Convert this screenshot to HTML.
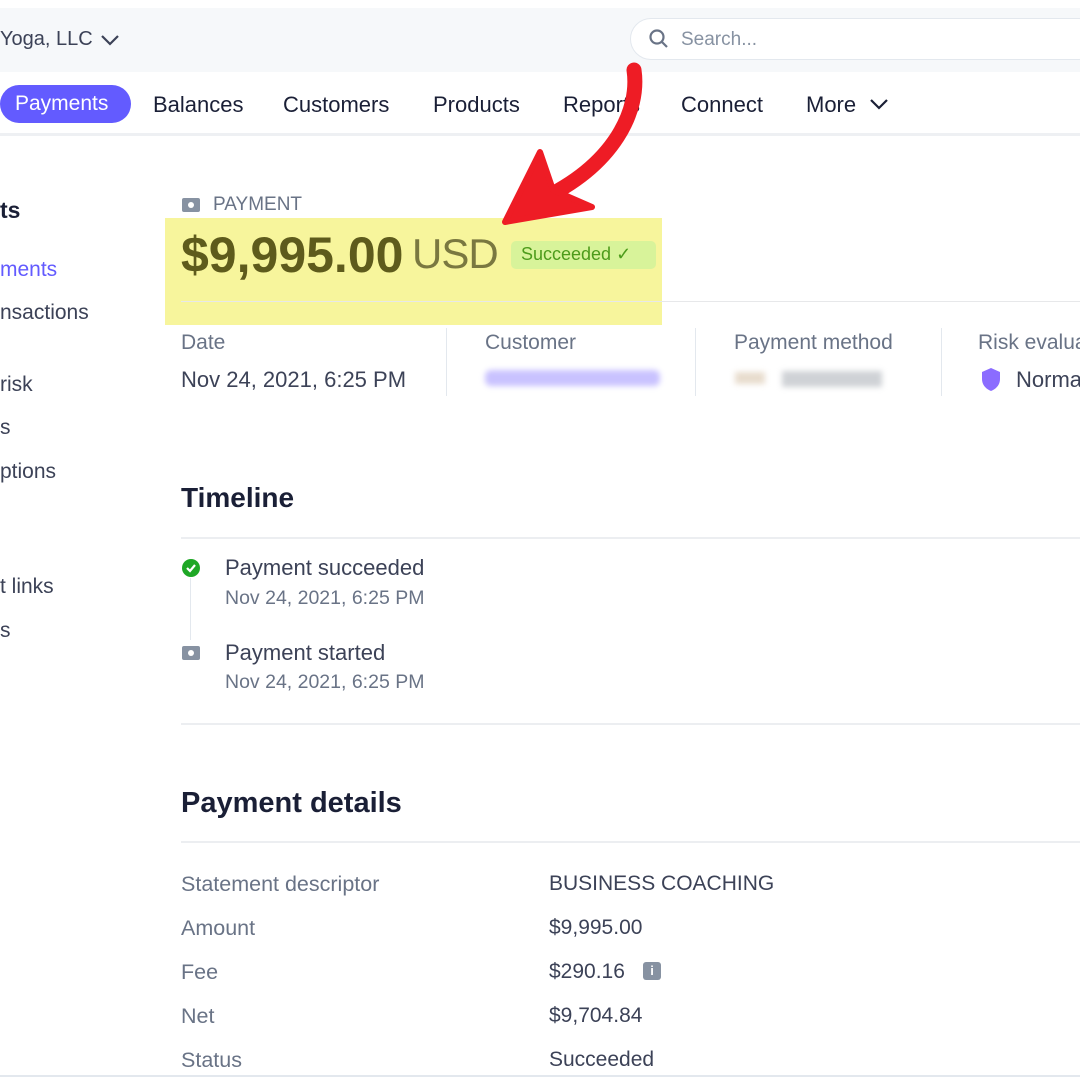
<!DOCTYPE html>
<html><head><meta charset="utf-8"><style>
*{margin:0;padding:0;box-sizing:border-box}
body{width:1080px;height:1080px;overflow:hidden;background:#fff;font-family:"Liberation Sans",sans-serif;position:relative;color:#3c4257}
.a{position:absolute;white-space:nowrap}
</style></head><body>
<div class="a" style="left:0;top:8px;width:1080px;height:64px;background:#f6f8fa"></div>
<div class="a" style="left:0;top:28px;font-size:20px;color:#3c4257">Yoga, LLC</div>
<svg class="a" style="left:100px;top:33px" width="20" height="14"><path d="M2 3l8 8 8-8" stroke="#3c4257" stroke-width="2.2" fill="none"/></svg>
<div class="a" style="left:630px;top:18px;width:470px;height:42px;background:#fff;border:1px solid #e3e8ee;border-radius:21px"></div>
<svg class="a" style="left:648px;top:28px" width="22" height="22"><circle cx="9" cy="9" r="6.5" stroke="#697386" stroke-width="2.2" fill="none"/><path d="M14 14l5 5" stroke="#697386" stroke-width="2.2"/></svg>
<div class="a" style="left:681px;top:29px;font-size:19px;color:#8792a2">Search...</div>
<div class="a" style="left:0;top:85px;width:131px;height:38px;background:#635bff;border-radius:19px"></div>
<div class="a" style="left:15px;top:92px;font-size:21px;color:#fff">Payments</div>
<div class="a" style="left:153px;top:92px;font-size:22px;color:#1a1f36">Balances</div>
<div class="a" style="left:283px;top:92px;font-size:22px;color:#1a1f36">Customers</div>
<div class="a" style="left:433px;top:92px;font-size:22px;color:#1a1f36">Products</div>
<div class="a" style="left:563px;top:92px;font-size:22px;color:#1a1f36">Reports</div>
<div class="a" style="left:681px;top:92px;font-size:22px;color:#1a1f36">Connect</div>
<div class="a" style="left:806px;top:92px;font-size:22px;color:#1a1f36">More</div>
<svg class="a" style="left:869px;top:97px" width="20" height="14"><path d="M2 3l8 8 8-8" stroke="#1a1f36" stroke-width="2.2" fill="none"/></svg>
<div class="a" style="left:0;top:133px;width:1080px;height:3px;background:#eef0f3"></div>

<div class="a" style="left:0;top:197px;font-size:23px;font-weight:bold;color:#1a1f36">ts</div>
<div class="a" style="left:0;top:258px;font-size:21px;color:#635bff">ments</div>
<div class="a" style="left:0;top:301px;font-size:21px">nsactions</div>
<div class="a" style="left:0;top:373px;font-size:21px">risk</div>
<div class="a" style="left:0;top:416px;font-size:21px">s</div>
<div class="a" style="left:0;top:460px;font-size:21px">ptions</div>
<div class="a" style="left:0;top:575px;font-size:21px">t links</div>
<div class="a" style="left:0;top:619px;font-size:21px">s</div>

<div class="a" style="left:165px;top:218px;width:497px;height:107px;background:#f7f59c"></div>
<svg class="a" style="left:181px;top:195px" width="20" height="18"><rect x="1" y="3" width="18" height="14" rx="2" fill="#8792a2"/><circle cx="10" cy="10" r="3" fill="#fff"/></svg>
<div class="a" style="left:213px;top:194px;font-size:19px;color:#697386">PAYMENT</div>
<div class="a" style="left:181px;top:226px;font-size:50px;font-weight:bold;color:#5e5b1c;letter-spacing:0px">$9,995.00</div>
<div class="a" style="left:412px;top:230px;font-size:42px;color:#7a7840;letter-spacing:-1px">USD</div>
<div class="a" style="left:511px;top:241px;width:145px;height:28px;background:#d8f39a;border-radius:5px"></div>
<div class="a" style="left:521px;top:244px;font-size:18px;color:#4d9b1b">Succeeded ✓</div>
<div class="a" style="left:181px;top:301px;width:900px;height:1px;background:#e7e8ea"></div>

<div class="a" style="left:181px;top:331px;font-size:21px;color:#697386">Date</div>
<div class="a" style="left:181px;top:367px;font-size:22px;color:#3c4257">Nov 24, 2021, 6:25 PM</div>
<div class="a" style="left:446px;top:328px;width:1px;height:68px;background:#e3e8ee"></div>
<div class="a" style="left:485px;top:331px;font-size:21px;color:#697386">Customer</div>
<div class="a" style="left:485px;top:370px;width:175px;height:16px;background:#c9c2ff;border-radius:6px;filter:blur(3px)"></div>
<div class="a" style="left:695px;top:328px;width:1px;height:68px;background:#e3e8ee"></div>
<div class="a" style="left:734px;top:331px;font-size:21px;color:#697386">Payment method</div>
<div class="a" style="left:735px;top:372px;width:30px;height:12px;background:#e8dccd;filter:blur(3px)"></div>
<div class="a" style="left:782px;top:371px;width:100px;height:16px;background:#cfd2d6;filter:blur(3px)"></div>
<div class="a" style="left:941px;top:328px;width:1px;height:68px;background:#e3e8ee"></div>
<div class="a" style="left:978px;top:331px;font-size:21px;color:#697386">Risk evaluation</div>
<svg class="a" style="left:980px;top:367px" width="22" height="26"><path d="M11 1L2 5v7c0 6 4 10 9 12 5-2 9-6 9-12V5z" fill="#8b6cff"/></svg>
<div class="a" style="left:1016px;top:367px;font-size:22px;color:#3c4257">Normal</div>

<div class="a" style="left:181px;top:482px;font-size:28px;font-weight:bold;color:#1a1f36">Timeline</div>
<div class="a" style="left:181px;top:537px;width:900px;height:2px;background:#eceef1"></div>
<div class="a" style="left:190px;top:578px;width:1px;height:62px;background:#e3e8ee"></div>
<svg class="a" style="left:181px;top:558px" width="20" height="20"><circle cx="10" cy="10" r="9" fill="#1ea725"/><path d="M6 10l3 3 5-6" stroke="#fff" stroke-width="2.2" fill="none"/></svg>
<div class="a" style="left:225px;top:555px;font-size:22px;color:#3c4257">Payment succeeded</div>
<div class="a" style="left:225px;top:587px;font-size:19.5px;color:#697386">Nov 24, 2021, 6:25 PM</div>
<svg class="a" style="left:181px;top:643px" width="20" height="18"><rect x="1" y="3" width="18" height="14" rx="2" fill="#8792a2"/><circle cx="10" cy="10" r="3" fill="#fff"/></svg>
<div class="a" style="left:225px;top:640px;font-size:22px;color:#3c4257">Payment started</div>
<div class="a" style="left:225px;top:671px;font-size:19.5px;color:#697386">Nov 24, 2021, 6:25 PM</div>
<div class="a" style="left:181px;top:723px;width:900px;height:2px;background:#eceef1"></div>

<div class="a" style="left:181px;top:787px;font-size:29px;font-weight:bold;color:#1a1f36">Payment details</div>
<div class="a" style="left:181px;top:841px;width:900px;height:2px;background:#eceef1"></div>
<div class="a" style="left:181px;top:862px;font-size:21.5px;color:#697386;line-height:44px">Statement descriptor<br>Amount<br>Fee<br>Net<br>Status</div>
<div class="a" style="left:549px;top:862px;font-size:21px;color:#3c4257;line-height:44px">BUSINESS COACHING<br>$9,995.00<br>$290.16<br>$9,704.84<br>Succeeded</div>
<div class="a" style="left:643px;top:962px;width:18px;height:18px;background:#8792a2;border-radius:3px;color:#fff;font-size:13px;font-weight:bold;text-align:center;line-height:18px">i</div>
<div class="a" style="left:0;top:1075px;width:1080px;height:5px;background:#fff;border-top:2px solid #e3e8ee"></div>

<svg class="a" style="left:0;top:0" width="1080" height="1080">
<path d="M634 70 C 640 110, 615 165, 540 200" stroke="#ee1c25" stroke-width="15" fill="none" stroke-linecap="round"/>
<path d="M505 222 L 540 152 L 553 190 L 592 207 Z" fill="#ee1c25" stroke="#ee1c25" stroke-width="6" stroke-linejoin="round"/>
</svg>
</body></html>
